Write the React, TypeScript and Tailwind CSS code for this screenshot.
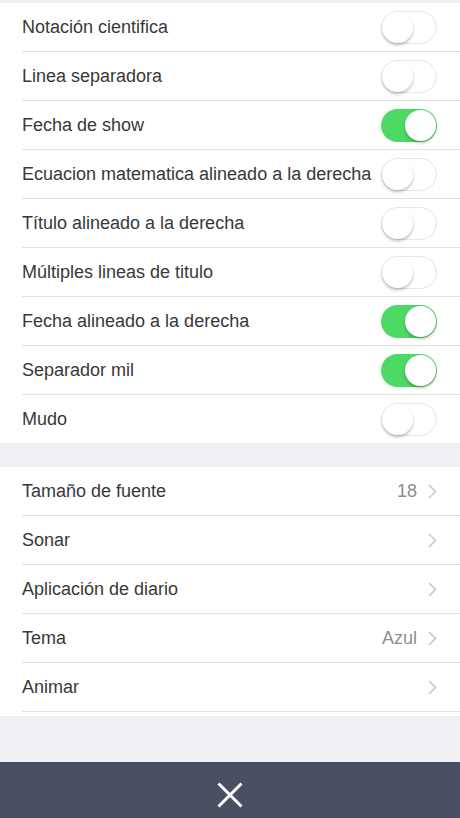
const toggles: { label: string; on: boolean }[] = [
  { label: "Notación cientifica", on: false },
  { label: "Linea separadora", on: false },
  { label: "Fecha de show", on: true },
  { label: "Ecuacion matematica alineado a la derecha", on: false },
  { label: "Título alineado a la derecha", on: false },
  { label: "Múltiples lineas de titulo", on: false },
  { label: "Fecha alineado a la derecha", on: true },
  { label: "Separador mil", on: true },
  { label: "Mudo", on: false },
];

const links: { label: string; value?: string }[] = [
  { label: "Tamaño de fuente", value: "18" },
  { label: "Sonar" },
  { label: "Aplicación de diario" },
  { label: "Tema", value: "Azul" },
  { label: "Animar" },
];

const Switch = ({ on }: { on: boolean }) => (
  <div
    className={`relative w-[56px] h-[33px] rounded-full shrink-0 ${
      on ? "bg-[#4cd964]" : "bg-white border border-[#e5e5ea]"
    }`}
  >
    <div
      className={`absolute w-[31px] h-[31px] rounded-full bg-white shadow-[0_2px_3px_rgba(0,0,0,0.25)] ${
        on ? "right-[1px] top-[1px]" : "left-[0px] top-[0px]"
      }`}
    />
  </div>
);

const Chevron = () => (
  <svg width="9" height="15" viewBox="0 0 9 15" fill="none" stroke="#c7c7cc" strokeWidth="1.6">
    <path d="M1 1 L7.5 7.5 L1 14" />
  </svg>
);

export default function App() {
  return (
    <div
      className="w-[460px] h-[818px] bg-[#efeff4] flex flex-col overflow-hidden"
      style={{ fontFamily: "'Liberation Sans', Arial, sans-serif" }}
    >
      <div className="h-[3px]" />

      {/* Switches */}
      <section className="bg-white pl-[22px]">
        {toggles.map((t, i) => (
          <div
            key={t.label}
            className={`flex items-center justify-between pr-[23px] ${
              i < toggles.length - 1 ? "h-[49px] border-b border-[#e0e0e4]" : "h-[48px]"
            }`}
          >
            <span className="text-[18px] text-[#383838] whitespace-nowrap">{t.label}</span>
            <Switch on={t.on} />
          </div>
        ))}
      </section>

      <div className="h-[24px]" />

      {/* Links */}
      <section className="bg-white pl-[22px] pb-[4px]">
        {links.map((l) => (
          <div
            key={l.label}
            className="h-[49px] flex items-center justify-between pr-[23px] border-b border-[#e0e0e4]"
          >
            <span className="text-[18px] text-[#383838]">{l.label}</span>
            <div className="flex items-center gap-[11px]">
              {l.value && <span className="text-[18px] text-[#8e8e93]">{l.value}</span>}
              <Chevron />
            </div>
          </div>
        ))}
      </section>

      <div className="flex-1" />

      {/* Close bar */}
      <div className="h-[56px] bg-[#4b4f63] flex items-center justify-center pt-[10px]">
        <svg width="26" height="26" viewBox="0 0 26 26" fill="none" stroke="white" strokeWidth="3">
          <path d="M1.5 1.5 L24.5 24.5 M24.5 1.5 L1.5 24.5" />
        </svg>
      </div>
    </div>
  );
}
